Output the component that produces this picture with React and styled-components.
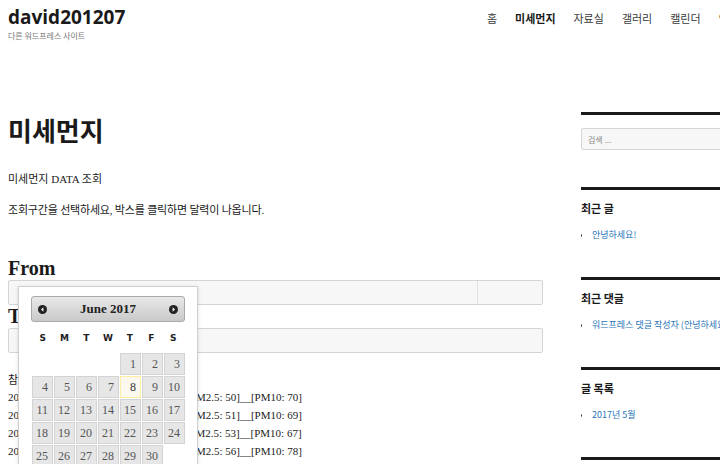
import React from 'react';
import styled, { createGlobalStyle } from 'styled-components';

const GlobalStyle = createGlobalStyle`
  html, body {
    margin: 0;
    padding: 0;
    background: #fff;
  }
  body {
    font-family: "Liberation Serif", "Noto Sans CJK KR", serif;
    color: #1a1a1a;
    overflow: hidden;
  }
`;

const KR = `"Noto Sans CJK KR", "Noto Sans", sans-serif`;

const menu = ['홈', '미세먼지', '자료실', '갤러리', '캘린더', '연락처'];

const dustRows = [
  ['09시', 50, 70],
  ['10시', 51, 69],
  ['11시', 53, 67],
  ['12시', 56, 78],
  ['13시', 55, 74],
  ['14시', 52, 71],
];

// June 2017 starts on Thursday
const calendarCells = [
  ...Array(4).fill(null),
  ...Array.from({ length: 30 }, (_, i) => i + 1),
];

const weekDays = ['S', 'M', 'T', 'W', 'T', 'F', 'S'];

const ArrowIcon = ({ dir }) => (
  <svg width="9" height="9" viewBox="0 0 10 10">
    <circle cx="5" cy="5" r="5" fill="#222" />
    {dir === 'left' ? (
      <path d="M6 2.6 L3.4 5 L6 7.4 Z" fill="#fff" />
    ) : (
      <path d="M4 2.6 L6.6 5 L4 7.4 Z" fill="#fff" />
    )}
  </svg>
);

const App = () => {
  return (
    <>
      <GlobalStyle />
      <Page>
        <Header>
          <Brand>
            <SiteTitle>david201207</SiteTitle>
            <Tagline>다른 워드프레스 사이트</Tagline>
          </Brand>
          <Nav>
            {menu.map((item) => (
              <NavItem key={item} $current={item === '미세먼지'}>{item}</NavItem>
            ))}
          </Nav>
        </Header>

        <Content>
          <Main>
            <PageTitle>미세먼지</PageTitle>
            <Text>미세먼지 DATA 조회</Text>
            <Guide>조회구간을 선택하세요, 박스를 클릭하면 달력이 나옵니다.</Guide>

            <Label>From</Label>
            <DateField>
              <FieldMain />
              <FieldSide />
            </DateField>
            <Label>To</Label>
            <DateField>
              <FieldMain />
            </DateField>

            <Note>참고 : 측정소 기준 시간별 농도</Note>
            <DataList>
              {dustRows.map(([time, pm25, pm10]) => (
                <DataLine key={time}>
                  2017년 06월 08일 {time} (서울시 중구)__[PM2.5: {pm25}]__[PM10: {pm10}]
                </DataLine>
              ))}
            </DataList>

            <Calendar>
              <CalHeader>
                <CalNav><ArrowIcon dir="left" /></CalNav>
                <CalTitle>June 2017</CalTitle>
                <CalNav><ArrowIcon dir="right" /></CalNav>
              </CalHeader>
              <WeekRow>
                {weekDays.map((d, i) => (
                  <WeekDay key={i}>{d}</WeekDay>
                ))}
              </WeekRow>
              <DayGrid>
                {calendarCells.map((day, i) =>
                  day ? (
                    <Day key={i} $today={day === 8}>{day}</Day>
                  ) : (
                    <Blank key={i} />
                  )
                )}
              </DayGrid>
            </Calendar>
          </Main>

          <Sidebar>
            <Widget $space={37}>
              <Search placeholder="검색 ..." />
            </Widget>
            <Widget>
              <WidgetTitle>최근 글</WidgetTitle>
              <List>
                <li><a>안녕하세요!</a></li>
              </List>
            </Widget>
            <Widget>
              <WidgetTitle>최근 댓글</WidgetTitle>
              <List>
                <li><a>워드프레스 댓글 작성자 (안녕하세요!)</a></li>
              </List>
            </Widget>
            <Widget>
              <WidgetTitle>글 목록</WidgetTitle>
              <List>
                <li><a>2017년 5월</a></li>
              </List>
            </Widget>
            <Widget />
          </Sidebar>
        </Content>
      </Page>
    </>
  );
};

export default App;

const Page = styled.div`
  width: 770px;
  height: 464px;
  padding-left: 8px;
  box-sizing: border-box;
  overflow: hidden;
`;

const Header = styled.header`
  display: flex;
  align-items: flex-start;
  height: 112px;
  padding-top: 5px;
  box-sizing: border-box;
`;

const Brand = styled.div`
  display: flex;
  flex-direction: column;
`;

const SiteTitle = styled.div`
  font-family: "Open Sans", "DejaVu Sans", sans-serif;
  font-weight: 700;
  font-size: 19px;
  line-height: 24px;
  color: #1a1a1a;
`;

const Tagline = styled.div`
  font-family: ${KR};
  font-size: 8px;
  line-height: 12px;
  margin-top: 1px;
  color: #777;
`;

const Nav = styled.nav`
  display: flex;
  gap: 18px;
  margin-left: auto;
  margin-top: 5px;
  white-space: nowrap;
  padding-right: 21px;
`;

const NavItem = styled.span`
  font-family: ${KR};
  font-size: 11px;
  line-height: 16px;
  font-weight: ${(p) => (p.$current ? 700 : 400)};
  color: ${(p) => (p.$current ? '#1a1a1a' : '#3a3a3a')};
`;

const Content = styled.div`
  display: grid;
  grid-template-columns: 535px 1fr;
  column-gap: 38px;
`;

const Main = styled.main`
  position: relative;
`;

const PageTitle = styled.h1`
  margin: 0;
  font-family: ${KR};
  font-size: 26px;
  line-height: 36px;
  font-weight: 700;
  color: #1a1a1a;
`;

const Text = styled.p`
  margin: 23px 0 0;
  font-family: "Liberation Serif", ${KR};
  font-size: 11px;
  line-height: 16px;
`;

const Guide = styled(Text)`
  margin-top: 15px;
  font-size: 11px;
  letter-spacing: -0.2px;
`;

const Label = styled.h2`
  margin: 39px 0 0;
  font-family: "Liberation Serif", serif;
  font-weight: 700;
  font-size: 20px;
  line-height: 23px;
  color: #1a1a1a;

  & + div + & {
    margin-top: 0;
  }
`;

const DateField = styled.div`
  display: flex;
  height: 25px;
  border: 1px solid #d4d4d4;
  border-radius: 2px;
  background: #f7f7f7;
  box-sizing: border-box;
`;

const FieldMain = styled.div`
  flex: 1;
`;

const FieldSide = styled.div`
  width: 64px;
  border-left: 1px solid #e2e2e2;
`;

const Note = styled.p`
  margin: 19px 0 0;
  font-family: "Liberation Serif", ${KR};
  font-size: 11px;
  line-height: 16px;
`;

const DataList = styled.div`
  display: flex;
  flex-direction: column;
`;

const DataLine = styled.div`
  font-family: "Liberation Serif", ${KR};
  font-size: 11px;
  line-height: 18px;
  white-space: nowrap;
  color: #222;
`;

const Calendar = styled.div`
  position: absolute;
  left: 10px;
  top: 174px;
  width: 180px;
  padding: 9px 12px 12px;
  box-sizing: border-box;
  background: #fff;
  border: 1px solid #cfcfcf;
  box-shadow: 0 1px 4px rgba(0, 0, 0, 0.12);
`;

const CalHeader = styled.div`
  display: flex;
  align-items: center;
  justify-content: space-between;
  height: 26px;
  padding: 0 6px;
  box-sizing: border-box;
  border: 1px solid #aaa;
  border-radius: 3px;
  background: linear-gradient(#e9e9e9, #c9c9c9);
`;

const CalNav = styled.span`
  display: flex;
  align-items: center;
`;

const CalTitle = styled.span`
  font-family: "Liberation Serif", serif;
  font-weight: 700;
  font-size: 13px;
  color: #222;
`;

const WeekRow = styled.div`
  display: grid;
  grid-template-columns: repeat(7, 1fr);
  height: 31px;
  align-items: center;
  padding: 0 1px;
`;

const WeekDay = styled.span`
  text-align: center;
  font-family: "DejaVu Sans", sans-serif;
  font-weight: 700;
  font-size: 9px;
  color: #222;
`;

const DayGrid = styled.div`
  display: grid;
  grid-template-columns: repeat(7, 21px);
  grid-auto-rows: 22px;
  gap: 1px;
  padding-left: 1px;
`;

const Day = styled.div`
  display: flex;
  align-items: center;
  justify-content: flex-end;
  padding-right: 4px;
  border: 1px solid ${(p) => (p.$today ? '#fcefa1' : '#d3d3d3')};
  background: ${(p) => (p.$today ? '#fbf9ee' : '#e6e6e6')};
  font-family: "Liberation Serif", serif;
  font-size: 12px;
  color: ${(p) => (p.$today ? '#363636' : '#555')};
`;

const Blank = styled.div``;

const Sidebar = styled.aside`
  display: flex;
  flex-direction: column;
  white-space: nowrap;
  overflow: hidden;
`;

const Widget = styled.section`
  border-top: 3px solid #1a1a1a;
  padding-top: 10px;
  margin-bottom: ${(p) => p.$space ?? 35}px;

  &:first-child {
    padding-top: 13px;
  }
`;

const Search = styled.input`
  display: block;
  width: 100%;
  height: 22px;
  box-sizing: border-box;
  border: 1px solid #d6d6d6;
  border-radius: 2px;
  background: #f7f7f7;
  padding: 0 6px;
  font-family: ${KR};
  font-size: 8px;
  outline: none;

  &::placeholder {
    color: #8a8a8a;
  }
`;

const WidgetTitle = styled.h2`
  margin: 0;
  font-family: ${KR};
  font-size: 11px;
  line-height: 16px;
  font-weight: 700;
  color: #1a1a1a;
`;

const List = styled.ul`
  margin: 12px 0 0;
  padding-left: 11px;
  font-family: ${KR};
  font-size: 9px;
  line-height: 14px;

  li::marker {
    color: #333;
  }

  a {
    color: #2673b8;
  }
`;
